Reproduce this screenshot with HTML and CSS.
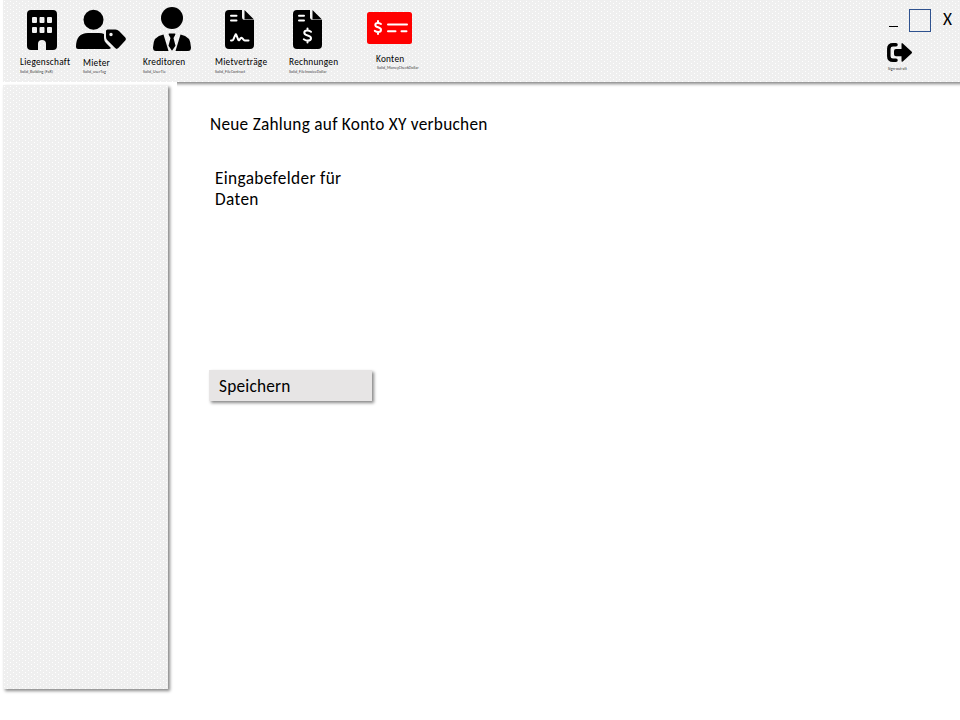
FILE: index.html
```
<!DOCTYPE html>
<html lang="de">
<head>
<meta charset="utf-8">
<title>Neue Zahlung</title>
<link rel="stylesheet" href="styles.css">
</head>
<body>
<div class="app">
  <header class="toolbar">
    <nav class="nav">
      <a class="item">
        <svg class="icon" width="56" height="56" viewBox="20 0 56 56"><path fill-rule="evenodd" d="M31 10h22q4 0 4 4v32q0 4-4 4h-7v-6q0-4-4-4t-4 4v6h-7q-4 0-4-4V14q0-4 4-4zM33 17q-1 0-1 1v4q0 1 1 1h3q1 0 1-1v-4q0-1-1-1zM40.500 17q-1 0-1 1v4q0 1 1 1h3q1 0 1-1v-4q0-1-1-1zM48 17q-1 0-1 1v4q0 1 1 1h3q1 0 1-1v-4q0-1-1-1zM33 27q-1 0-1 1v4q0 1 1 1h3q1 0 1-1v-4q0-1-1-1zM40.500 27q-1 0-1 1v4q0 1 1 1h3q1 0 1-1v-4q0-1-1-1zM48 27q-1 0-1 1v4q0 1 1 1h3q1 0 1-1v-4q0-1-1-1z"/></svg>
        <span class="label l1">Liegenschaft</span><span class="hint h1">Solid_Building (FaR)</span>
      </a>
      <a class="item">
        <svg class="icon" width="67" height="56" viewBox="76 0 67 56"><circle cx="93.500" cy="19.700" r="10"/><path d="M88 33h11q3 0 5 1v4q0 3 2 5l5 5q-1 1-2 1H78q-2 0-2-2Q76 33 88 33z"/><path fill-rule="evenodd" d="M107.500 29.500h8q2 0 3.500 1.500l6.300 6.500q1.400 1.500 0 3l-7 7.600q-1.600 1.600-3.200 0l-7.500-7.500q-1.600-1.600-1.600-3.600v-6q0-1.500 1.500-1.500zM111 32.800a1.700 1.700 0 1 0 0 3.400a1.700 1.700 0 1 0 0-3.400z"/></svg>
        <span class="label l2">Mieter</span><span class="hint h2">Solid_userTag</span>
      </a>
      <a class="item">
        <svg class="icon" width="72" height="56" viewBox="143 0 72 56"><circle cx="172" cy="18" r="11"/><path d="M163.500 34.500l5 16.500H156q-3 0-3-3.500Q153 36 163.500 34.500zM180.500 34.500l-5 16.500H188q3 0 3-3.500Q191 36 180.500 34.500zM169.500 33.500h5q1.300 0 .8 1.200l-1.800 3.300 2 7.800-3.500 5-3.500-5 2-7.800-1.800-3.300q-.5-1.200.8-1.200z"/></svg>
        <span class="label l3">Kreditoren</span><span class="hint h3">Solid_UserTie</span>
      </a>
      <a class="item">
        <svg class="icon" width="74" height="56" viewBox="215 0 74 56"><path d="M229 10h13v7q0 3 3 3h9v25q0 4-4 4h-21q-4 0-4-4V14q0-4 4-4zM244.500 10l9.500 9.500h-9.500z"/><path class="cut" d="M231 15.800h5.500M231 20.500h5.500M231 40.500h1q1 0 1.400-1.200l1.900-4.500q.5-1.300 1 0l2 5q.4 1 1.200 0l1.200-1.700q.7-.8 1.500 0l1.500 1.800q.5.600 1.300.6h3.500"/></svg>
        <span class="label l4">Mietverträge</span><span class="hint h4">Solid_FileContract</span>
      </a>
      <a class="item">
        <svg class="icon" width="78" height="56" viewBox="289 0 78 56"><path d="M297 10h13v7q0 3 3 3h9v25q0 4-4 4h-21q-4 0-4-4V14q0-4 4-4zM312.500 10l9.500 9.500h-9.500z"/><path class="cut" d="M299 15.800h5M299 20.500h5M307.500 28.500v2M307.500 40.500v2M311 31.800q-1.700-1.200-3.700-1.200-3 0-3 2.200c0 3.600 6.700 1.800 6.700 5.400q0 2.400-3.200 2.400-2 0-4-1.400"/></svg>
        <span class="label l5">Rechnungen</span><span class="hint h5">Solid_FileInvoiceDollar</span>
      </a>
      <a class="item">
        <svg class="icon" width="60" height="56" viewBox="367 0 60 56"><rect class="card" x="367" y="12" width="45" height="32" rx="2.500"/><path class="cut" d="M388 24.500h19M388 31.300h7.500M401.500 31.300h5M378 21v2M378 32v2M381 24q-1.500-1-3.200-1-2.500 0-2.500 1.900c0 3 5.700 1.800 5.700 4.800q0 2.200-2.800 2.200-1.700 0-3.400-1.100"/></svg>
        <span class="label l6">Konten</span><span class="hint h6">Solid_MoneyCheckDollar</span>
      </a>
    </nav>
    <div class="side">
      <div class="controls"><span class="min"></span><span class="max"></span><span class="close">X</span></div>
      <svg class="out" width="26" height="20" viewBox="887 43 26 20"><path class="door" d="M896 44.800h-3q-4.200 0-4.200 4v7.500q0 4 4.200 4h3"/><path d="M896 49h5.500v-5q0-1.500 1.300-.6l8.700 8q1 1 0 2l-8.700 8q-1.300.9-1.300-.6v-4.500H896q-2 0-2-2V51q0-2 2-2z"/></svg>
      <span class="signout">Sign-out-alt</span>
    </div>
  </header>
  <div class="body">
    <aside class="sidebar"></aside>
    <main class="content">
      <h1>Neue Zahlung auf Konto XY verbuchen</h1>
      <p>Eingabefelder für<br>Daten</p>
      <button>Speichern</button>
    </main>
  </div>
</div>
</body>
</html>
```
FILE: styles.css
```
* { box-sizing: border-box; }
body { margin: 0; background: #fff; color: #000; font-family: Carlito, Calibri, Lato, sans-serif; }
.app { width: 960px; height: 720px; overflow: hidden; display: flex; flex-direction: column; }
.toolbar, .sidebar {
  background-color: #efefef;
  background-image: radial-gradient(circle at 1.5px 1.5px, #fff 0.7px, transparent 1px), radial-gradient(circle at 1.5px 1.5px, #fff 0.7px, transparent 1px);
  background-size: 6px 4px;
  background-position: 0 0, 3px 2px;
}
.toolbar { height: 82px; margin-left: 3px; display: flex; justify-content: space-between; box-shadow: 3px 2px 3px #888; flex: none; }
.nav { display: flex; padding-left: 17px; }
.item { display: flex; flex-direction: column; align-items: flex-start; }
.icon { display: block; flex: none; }
.label { font-size: 9.3px; line-height: 12px; letter-spacing: 0.25px; white-space: nowrap; }
.hint { font-size: 4.1px; line-height: 6px; margin-top: 1px; color: #444; white-space: nowrap; }
.l2, .h2 { margin-left: 7px; }
.l2 { margin-top: 1px; }
.h2 { margin-top: 0; }
.l6 { margin: -3px 0 0 9px; }
.h6 { margin-left: 10px; margin-top: 0; }
.item:nth-child(1) { width: 56px; }
.item:nth-child(2) { width: 67px; }
.item:nth-child(3) { width: 72px; }
.item:nth-child(4) { width: 74px; }
.item:nth-child(5) { width: 78px; }
.cut { fill: none; stroke: #fff; stroke-width: 2; stroke-linecap: round; stroke-linejoin: round; }
.card { fill: #f00; }
.side { width: 73px; padding-top: 9px; display: flex; flex-direction: column; align-items: flex-start; }
.controls { display: flex; height: 23px; }
.min { width: 9px; height: 1px; margin: 17px 0 0 2px; background: #000; }
.max { width: 22px; height: 23px; margin-left: 11px; border: 1px solid #2f528f; }
.close { margin-left: 12px; font-size: 17.3px; line-height: 21px; }
.out { margin-top: 11px; display: block; }
.door { fill: none; stroke: #000; stroke-width: 3.5; stroke-linecap: round; }
.signout { font-size: 4px; line-height: 6px; margin: 3px 0 0 1px; color: #333; }
.body { display: flex; flex: 1; }
.sidebar { width: 165px; height: 604px; margin: 3px 0 0 3px; box-shadow: 2px 2px 3px #888, 0 0 0 3px #fff, 6px 0 0 3px #fff; }
.content { padding: 31px 0 0 41px; display: flex; flex-direction: column; align-items: flex-start; }
h1 { margin: 0 0 0 1px; padding-top: 1px; font-size: 17.3px; font-weight: 400; line-height: 21px; letter-spacing: 0.26px; white-space: nowrap; }
p { margin: 33px 0 0 6px; font-size: 17.3px; line-height: 21px; letter-spacing: 0.35px; }
button { width: 163px; height: 31px; margin: 160px 0 0; padding: 2px 10px 0; border: 0; background: #e7e5e5; box-shadow: 2px 2px 3px #888; font: 17.3px/29px Carlito, Calibri, Lato, sans-serif; letter-spacing: 0.2px; text-align: left; color: #000; }
```
